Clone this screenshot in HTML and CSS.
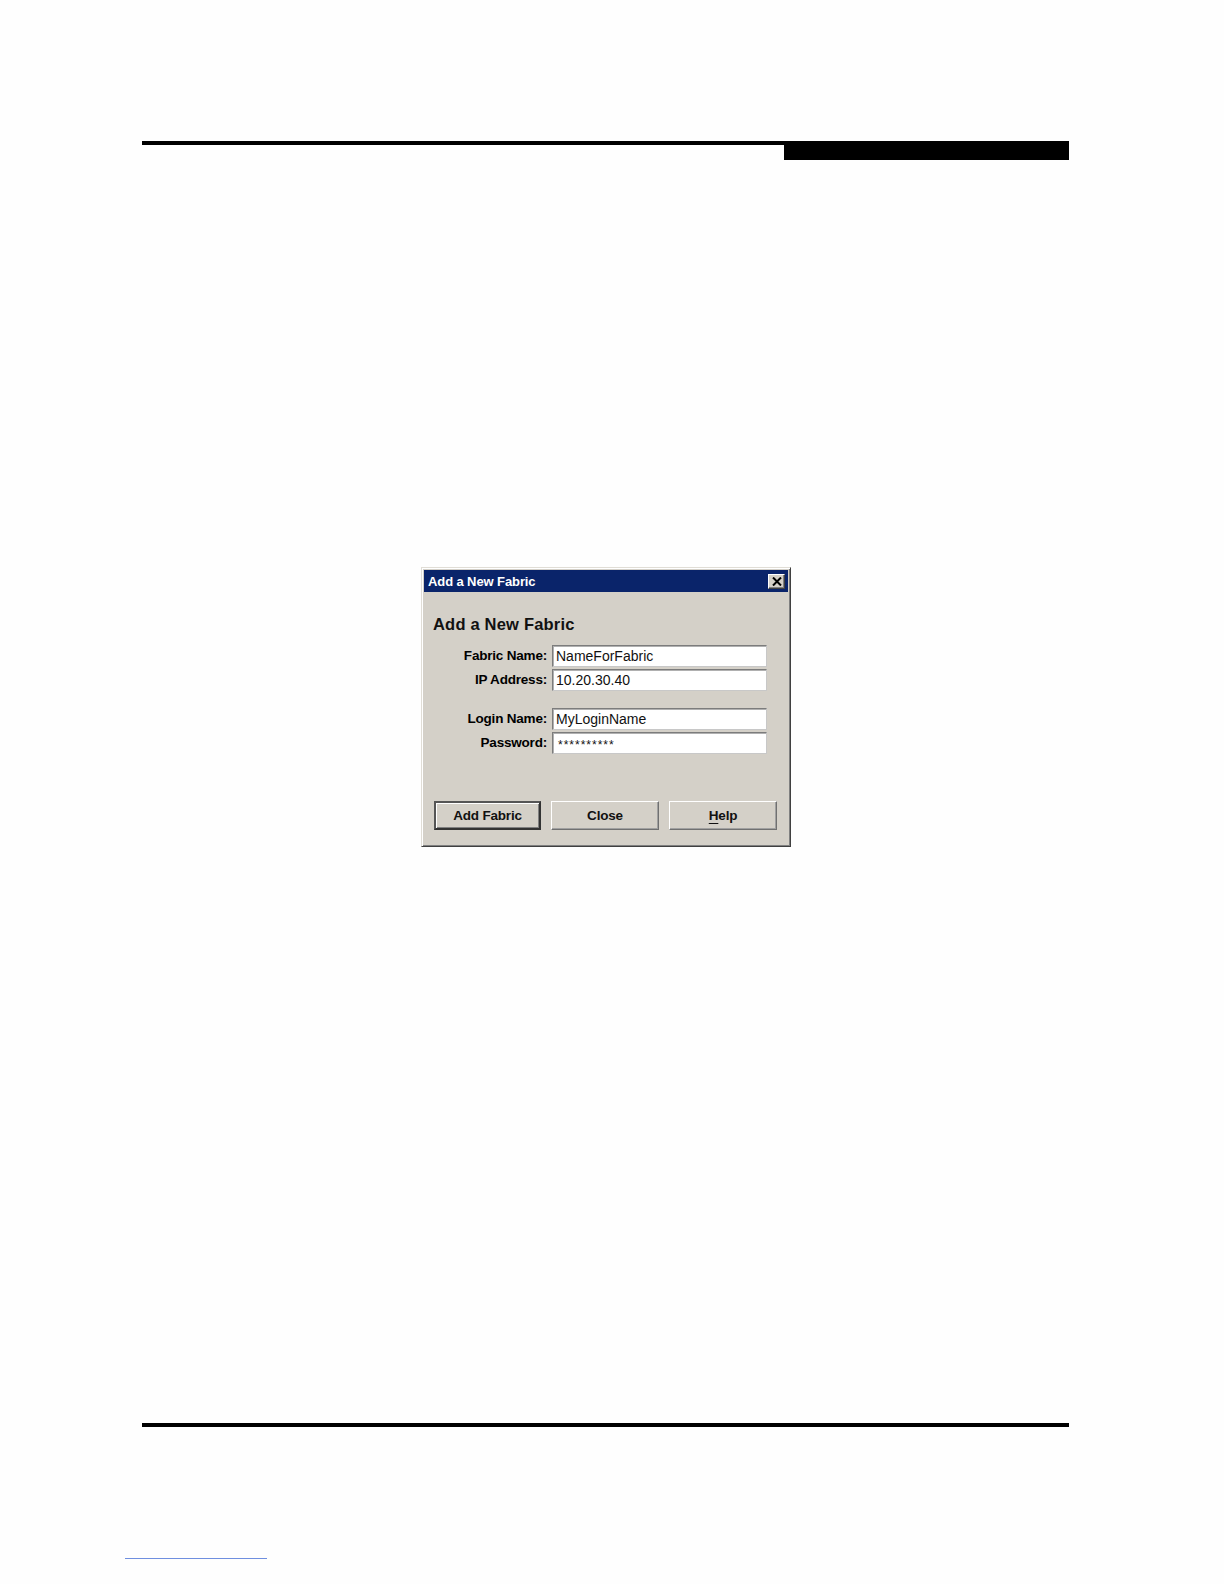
FILE: index.html
```html
<!DOCTYPE html>
<html lang="en">
<head>
<meta charset="utf-8">
<title>Add a New Fabric</title>
<link rel="stylesheet" href="styles.css">
</head>
<body>
<div class="page">
  <div class="header">
    <div class="rule"></div>
    <div class="tab"></div>
  </div>

  <div class="dialog">
    <div class="titlebar">
      <span class="title">Add a New Fabric</span>
      <span class="close-btn">
        <svg width="10" height="9" viewBox="0 0 10 9"><path d="M1 0.5 L9 8.5 M9 0.5 L1 8.5" stroke="#000" stroke-width="2" fill="none"/></svg>
      </span>
    </div>
    <div class="body">
      <div class="heading">Add a New Fabric</div>
      <div class="form">
        <label class="label">Fabric Name:</label>
        <div class="field">NameForFabric</div>
        <label class="label">IP Address:</label>
        <div class="field">10.20.30.40</div>
        <div class="spacer"></div>
        <label class="label">Login Name:</label>
        <div class="field">MyLoginName</div>
        <label class="label">Password:</label>
        <div class="field pw">**********</div>
      </div>
      <div class="buttons">
        <button class="btn default">Add Fabric</button>
        <button class="btn">Close</button>
        <button class="btn"><u>H</u>elp</button>
      </div>
    </div>
  </div>

  <div class="footer-rule"></div>
  <div class="link-line"></div>
</div>
</body>
</html>
```
FILE: styles.css
```css
html, body {
  margin: 0;
  padding: 0;
  background: #fefefe;
}

.page {
  width: 1224px;
  height: 1584px;
  padding-top: 141px;
  box-sizing: border-box;
  font-family: "Liberation Sans", Arial, sans-serif;
}

.header {
  margin-left: 142px;
  width: 927px;
}

.rule {
  height: 4px;
  background: #000;
}

.tab {
  margin-left: 642px;
  width: 285px;
  height: 15px;
  background: #000;
}

.dialog {
  margin: 407px 0 0 421px;
  width: 370px;
  height: 280px;
  box-sizing: border-box;
  background: #d4d0c8;
  border: 1px solid;
  border-color: #e0ddd6 #404040 #404040 #e0ddd6;
  box-shadow: inset 1px 1px 0 #ffffff, inset -1px -1px 0 #808080;
  padding: 2px;
  display: flex;
  flex-direction: column;
}

.titlebar {
  height: 22px;
  background: #0a246a;
  display: flex;
  align-items: center;
  justify-content: space-between;
  padding: 0 3px 0 4px;
}

.title {
  color: #fff;
  font-weight: bold;
  font-size: 13px;
  letter-spacing: -0.1px;
}

.close-btn {
  width: 17px;
  height: 15px;
  box-sizing: border-box;
  background: #d4d0c8;
  border: 1px solid;
  border-color: #fff #404040 #404040 #fff;
  box-shadow: inset -1px -1px 0 #808080;
  display: flex;
  align-items: center;
  justify-content: center;
}

.close-btn svg {
  display: block;
}

.body {
  flex: 1;
  padding: 22px 0 0 9px;
  display: flex;
  flex-direction: column;
}

.heading {
  font-size: 16.5px;
  font-weight: bold;
  line-height: 20px;
  color: #111;
  letter-spacing: 0.2px;
}

.form {
  margin-top: 11px;
  display: grid;
  grid-template-columns: 114px 215px;
  column-gap: 5px;
  row-gap: 2px;
}

.label {
  text-align: right;
  font-size: 13.5px;
  font-weight: bold;
  line-height: 22px;
  height: 22px;
  color: #000;
  letter-spacing: -0.2px;
}

.field {
  height: 22px;
  box-sizing: border-box;
  background: #fff;
  border: 1px solid;
  border-color: #7c7c7c #c8c8c8 #c8c8c8 #7c7c7c;
  box-shadow: inset 1px 1px 0 #b0b0b0;
  font-size: 14px;
  line-height: 21px;
  padding-left: 3px;
  color: #111;
  overflow: hidden;
}

.field.pw {
  font-size: 12px;
  letter-spacing: 1px;
  line-height: 25px;
  padding-left: 5px;
}

.spacer {
  grid-column: 1 / span 2;
  height: 13px;
}

.buttons {
  margin-top: 47px;
  display: flex;
  gap: 10px;
  padding-left: 1px;
}

.btn {
  width: 108px;
  height: 29px;
  box-sizing: border-box;
  background: #d4d0c8;
  border: 1px solid;
  border-color: #ffffff #707070 #707070 #ffffff;
  box-shadow: inset -1px -1px 0 #a0a0a0;
  font-family: "Liberation Sans", Arial, sans-serif;
  font-size: 13.5px;
  font-weight: bold;
  color: #111;
  letter-spacing: -0.2px;
  padding: 0;
}

.btn.default {
  width: 107px;
  border: 2px solid;
  border-color: #555 #333 #333 #555;
  box-shadow: inset 1px 1px 0 #fff, inset -1px -1px 0 #808080;
}

.btn u {
  text-decoration-thickness: 1px;
  text-underline-offset: 3px;
}

.footer-rule {
  margin: 576px 0 0 142px;
  width: 927px;
  height: 4px;
  background: #000;
}

.link-line {
  margin: 131px 0 0 125px;
  width: 142px;
  height: 1px;
  background: #6f8fe0;
}
```
